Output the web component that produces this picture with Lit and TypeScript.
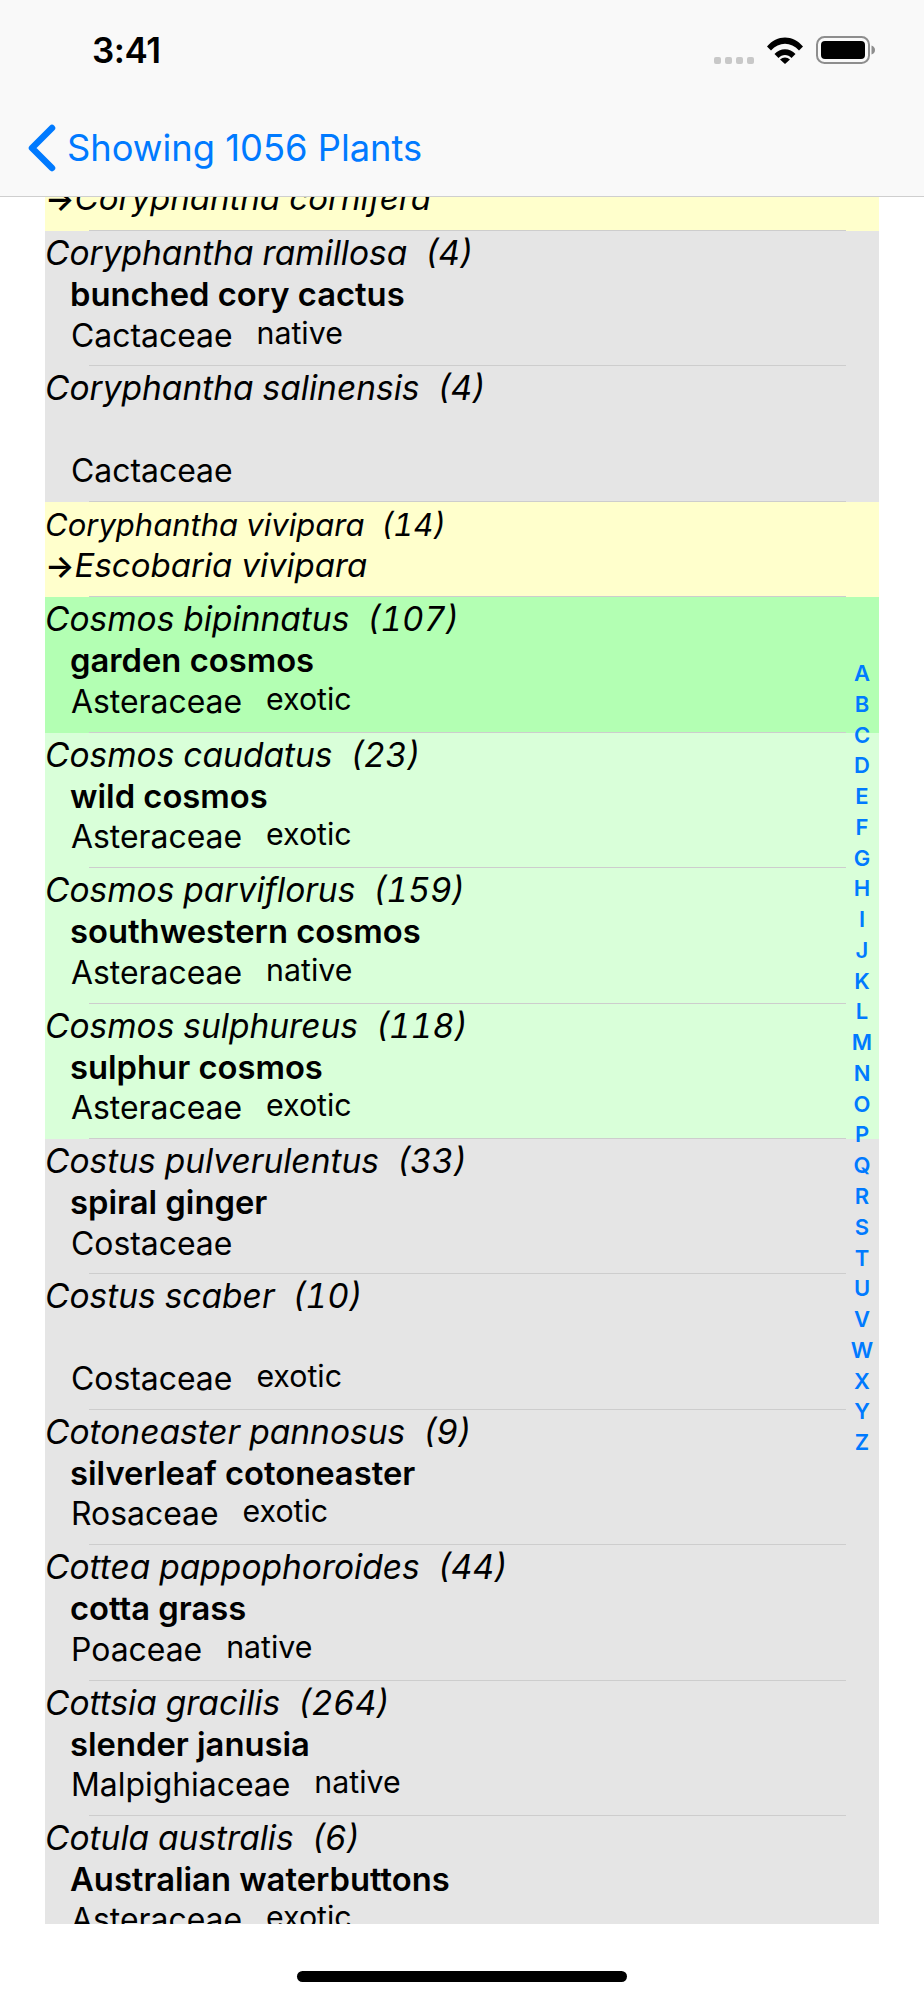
import { LitElement, html, css } from "lit";
import { customElement } from "lit/decorators.js";

type Tone = "gray" | "yellow" | "green" | "mint";

interface Plant {
  name: string;
  count?: number;
  tone: Tone;
  common?: string;
  synonym?: string;
  family?: string;
  origin?: string;
}

const PLANTS: Plant[] = [
  { name: "", tone: "yellow", synonym: "Coryphantha cornifera" },
  { name: "Coryphantha ramillosa", count: 4, tone: "gray", common: "bunched cory cactus", family: "Cactaceae", origin: "native" },
  { name: "Coryphantha salinensis", count: 4, tone: "gray", family: "Cactaceae" },
  { name: "Coryphantha vivipara", count: 14, tone: "yellow", synonym: "Escobaria vivipara" },
  { name: "Cosmos bipinnatus", count: 107, tone: "green", common: "garden cosmos", family: "Asteraceae", origin: "exotic" },
  { name: "Cosmos caudatus", count: 23, tone: "mint", common: "wild cosmos", family: "Asteraceae", origin: "exotic" },
  { name: "Cosmos parviflorus", count: 159, tone: "mint", common: "southwestern cosmos", family: "Asteraceae", origin: "native" },
  { name: "Cosmos sulphureus", count: 118, tone: "mint", common: "sulphur cosmos", family: "Asteraceae", origin: "exotic" },
  { name: "Costus pulverulentus", count: 33, tone: "gray", common: "spiral ginger", family: "Costaceae" },
  { name: "Costus scaber", count: 10, tone: "gray", family: "Costaceae", origin: "exotic" },
  { name: "Cotoneaster pannosus", count: 9, tone: "gray", common: "silverleaf cotoneaster", family: "Rosaceae", origin: "exotic" },
  { name: "Cottea pappophoroides", count: 44, tone: "gray", common: "cotta grass", family: "Poaceae", origin: "native" },
  { name: "Cottsia gracilis", count: 264, tone: "gray", common: "slender janusia", family: "Malpighiaceae", origin: "native" },
  { name: "Cotula australis", count: 6, tone: "gray", common: "Australian waterbuttons", family: "Asteraceae", origin: "exotic" },
];

const LETTERS = "ABCDEFGHIJKLMNOPQRSTUVWXYZ".split("");

@customElement("app-root")
export class AppRoot extends LitElement {
  static styles = css`
    :host {
      display: block;
      width: 924px;
      height: 2000px;
      background: #ffffff;
      font-family: Inter, "Liberation Sans", sans-serif;
      color: #000000;
      overflow: hidden;
    }

    .top {
      height: 196px;
      background: #f9f9f9;
      border-bottom: 1px solid #cfcfcf;
      display: flex;
      flex-direction: column;
    }

    .status {
      height: 100px;
      display: flex;
      align-items: flex-start;
      justify-content: space-between;
      padding: 0 48px 0 92px;
    }

    .clock {
      font-size: 35px;
      font-weight: 600;
      line-height: 42px;
      margin-top: 29px;
      letter-spacing: -0.5px;
    }

    .signals {
      display: flex;
      align-items: flex-end;
      margin-top: 36px;
    }

    .dots {
      display: flex;
      gap: 4px;
      margin-right: 13px;
    }

    .dots span {
      width: 7px;
      height: 7px;
      border-radius: 2px;
      background: #c8c8c8;
    }

    .wifi {
      display: block;
      margin-right: 13px;
    }

    .battery {
      display: block;
    }

    .back {
      display: flex;
      align-items: center;
      height: 46px;
      margin-top: 25px;
      padding-left: 26px;
      color: #007aff;
      font-size: 36.3px;
      line-height: 46px;
    }

    .back svg {
      display: block;
      margin-right: 8px;
    }

    .list {
      position: relative;
      height: 1727px;
      margin: 0 45px;
      overflow: hidden;
    }

    .rows {
      margin-top: -61.67px;
    }

    .row {
      height: 135.4px;
      display: flex;
      flex-direction: column;
      box-sizing: border-box;
    }

    .row.short {
      height: 95.67px;
    }

    .row.short .name {
      font-size: 31px;
    }

    .gray {
      background: #e5e5e5;
    }

    .yellow {
      background: #ffffcc;
    }

    .green {
      background: #b3ffb3;
    }

    .mint {
      background: #d9ffd9;
    }

    .name {
      height: 41px;
      margin-top: 2px;
      font-size: 33.5px;
      font-style: italic;
      font-variant-numeric: tabular-nums;
      line-height: 41px;
      white-space: pre;
    }

    .common {
      height: 41px;
      padding-left: 25px;
      font-size: 32.75px;
      font-weight: 600;
      line-height: 41px;
    }

    .synonym {
      height: 40px;
      font-size: 33px;
      font-style: italic;
      line-height: 40px;
    }

    .arrow {
      font-style: normal;
      font-weight: 600;
      font-size: 31px;
    }

    .meta {
      display: flex;
      align-items: baseline;
      gap: 24px;
      height: 38px;
      margin-top: 1.5px;
      padding-left: 26px;
      font-size: 31.9px;
      line-height: 38px;
    }

    .origin {
      position: relative;
      top: -3px;
      font-size: 30.3px;
    }

    .sep {
      height: 1px;
      margin: auto 33px 0 44px;
      background: #cdcdcd;
    }

    .index {
      position: absolute;
      top: 461px;
      right: 0;
      width: 34px;
      display: flex;
      flex-direction: column;
      align-items: center;
      color: #007aff;
      font-size: 22px;
      font-weight: 600;
      line-height: 30.76px;
    }

    .home {
      display: flex;
      justify-content: center;
      padding-top: 47px;
    }

    .home span {
      width: 330px;
      height: 11px;
      border-radius: 6px;
      background: #000000;
    }
  `;

  render() {
    return html`
      <div class="top">
        <div class="status">
          <div class="clock">3:41</div>
          <div class="signals">
            <div class="dots"><span></span><span></span><span></span><span></span></div>
            ${this.renderWifi()} ${this.renderBattery()}
          </div>
        </div>
        <div class="back">
          <svg width="33" height="48" viewBox="0 0 33 48">
            <path d="M26 4 L6 24 L26 44" fill="none" stroke="#007aff" stroke-width="6.5" stroke-linecap="round" stroke-linejoin="round" />
          </svg>
          <span>Showing 1056 Plants</span>
        </div>
      </div>
      <div class="list">
        <div class="rows">${PLANTS.map((p) => this.renderRow(p))}</div>
        <div class="index">${LETTERS.map((l) => html`<span>${l}</span>`)}</div>
      </div>
      <div class="home"><span></span></div>
    `;
  }

  private renderRow(p: Plant) {
    const title = p.count !== undefined ? `${p.name}  (${p.count})` : p.name;
    if (p.synonym) {
      return html`
        <div class="row short ${p.tone}">
          <div class="name">${title}</div>
          <div class="synonym"><span class="arrow">→</span>${p.synonym}</div>
          <div class="sep"></div>
        </div>
      `;
    }
    return html`
      <div class="row ${p.tone}">
        <div class="name">${title}</div>
        <div class="common">${p.common ?? ""}</div>
        <div class="meta">
          <span>${p.family}</span>
          ${p.origin ? html`<span class="origin">${p.origin}</span>` : ""}
        </div>
        <div class="sep"></div>
      </div>
    `;
  }

  private renderWifi() {
    return html`
      <svg class="wifi" width="36" height="27" viewBox="0 0 36 27">
        <path d="M0 9.5 C10 -2.5 26 -2.5 36 9.5 L32 13.5 C24 4.5 12 4.5 4 13.5 Z" fill="#000" />
        <path d="M7.5 17 C13 10.5 23 10.5 28.5 17 L24.5 21 C21 17 15 17 11.5 21 Z" fill="#000" />
        <path d="M13 22.5 C16 19.8 20 19.8 23 22.5 L18 27 Z" fill="#000" />
      </svg>
    `;
  }

  private renderBattery() {
    return html`
      <svg class="battery" width="60" height="28" viewBox="0 0 60 28">
        <rect x="1" y="1" width="52" height="26" rx="7.5" fill="none" stroke="#8e8e8e" stroke-width="2" />
        <rect x="5" y="5" width="44" height="18" rx="4" fill="#000" />
        <path d="M55.5 9.5 C58 10.5 59 12 59 14 C59 16 58 17.5 55.5 18.5 Z" fill="#8e8e8e" />
      </svg>
    `;
  }
}

declare global {
  interface HTMLElementTagNameMap {
    "app-root": AppRoot;
  }
}
